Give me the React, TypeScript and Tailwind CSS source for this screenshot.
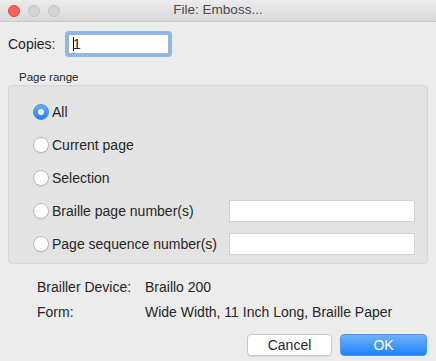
import React from "react";

const font = { fontFamily: '"Helvetica Neue", "Liberation Sans", Arial, sans-serif' };

function Radio({ checked, label }: { checked?: boolean; label: string }) {
  return (
    <div className="flex items-center h-[22px]">
      {checked ? (
        <div className="w-[16px] h-[16px] rounded-full bg-gradient-to-b from-[#68aef9] to-[#1f7ef3] border border-[#3f8fe8] flex items-center justify-center">
          <div className="w-[6px] h-[6px] rounded-full bg-white" />
        </div>
      ) : (
        <div className="w-[16px] h-[16px] rounded-full bg-white border border-[#b9b9b9] shadow-[0_1px_0_rgba(0,0,0,0.05)]" />
      )}
      <span className="ml-[3px] text-[14px] text-[#262626]">{label}</span>
    </div>
  );
}

export default function App() {
  return (
    <div style={font} className="w-[436px] h-[361px] bg-[#ececec] flex flex-col overflow-hidden">
      {/* Title bar */}
      <div className="h-[22px] grid grid-cols-[80px_1fr_80px] items-center bg-gradient-to-b from-[#ececec] to-[#d9d9d9] border-b border-[#c8c8c8]">
        <div className="flex items-center gap-[8px] pl-[8px]">
          <div className="w-[12px] h-[12px] rounded-full bg-[#fc605c] border border-[#e0443e]" />
          <div className="w-[12px] h-[12px] rounded-full bg-[#d3d3d3] border border-[#c2c2c2]" />
          <div className="w-[12px] h-[12px] rounded-full bg-[#d3d3d3] border border-[#c2c2c2]" />
        </div>
        <div className="text-center text-[13.5px] text-[#4a4a4a]">File: Emboss...</div>
        <div />
      </div>

      {/* Copies */}
      <div className="flex items-center mt-[9px] pl-[8px] h-[26px]">
        <span className="text-[14px] text-[#262626] w-[57px]">Copies:</span>
        <div className="w-[107px] h-[26px] rounded-[4px] bg-[#8cb8ee] p-[3px]">
          <div className="w-full h-full bg-white border border-[#9fb5d0] flex items-center pl-[4px]">
            <div className="w-[1px] h-[14px] bg-black" />
            <span className="text-[14px] text-[#222] -ml-[1px]">1</span>
          </div>
        </div>
      </div>

      {/* Page range */}
      <div className="mt-[14px] pl-[19px] text-[11.5px] leading-[13px] text-[#262626]">Page range</div>
      <div className="mx-[8px] mt-[1px] h-[179px] rounded-[4px] bg-[#e3e3e3] border border-[#d7d7d7] pt-[15px] pl-[24px] pr-[12px] flex flex-col gap-[11px]">
        <Radio checked label="All" />
        <Radio label="Current page" />
        <Radio label="Selection" />
        <div className="flex items-center justify-between">
          <Radio label="Braille page number(s)" />
          <div className="w-[186px] h-[22px] bg-white border border-[#d2d2d2]" />
        </div>
        <div className="flex items-center justify-between">
          <Radio label="Page sequence number(s)" />
          <div className="w-[186px] h-[22px] bg-white border border-[#d2d2d2]" />
        </div>
      </div>

      {/* Info */}
      <div className="mt-[15px] pl-[37px] grid grid-cols-[108px_1fr] gap-y-[9px] text-[14px] text-[#262626] leading-[16px]">
        <span>Brailler Device:</span>
        <span>Braillo 200</span>
        <span>Form:</span>
        <span>Wide Width, 11 Inch Long, Braille Paper</span>
      </div>

      {/* Buttons */}
      <div className="mt-[14px] flex justify-end gap-[8px] pr-[9px]">
        <button className="w-[85px] h-[22px] rounded-[4px] bg-white border border-[#c8c8c8] shadow-[0_1px_0_rgba(0,0,0,0.08)] text-[14px] text-[#262626]">
          Cancel
        </button>
        <button className="w-[87px] h-[22px] rounded-[4px] bg-gradient-to-b from-[#6cb3fa] to-[#1a82fb] border border-[#4a95f0] text-[14px] text-white">
          OK
        </button>
      </div>
    </div>
  );
}
